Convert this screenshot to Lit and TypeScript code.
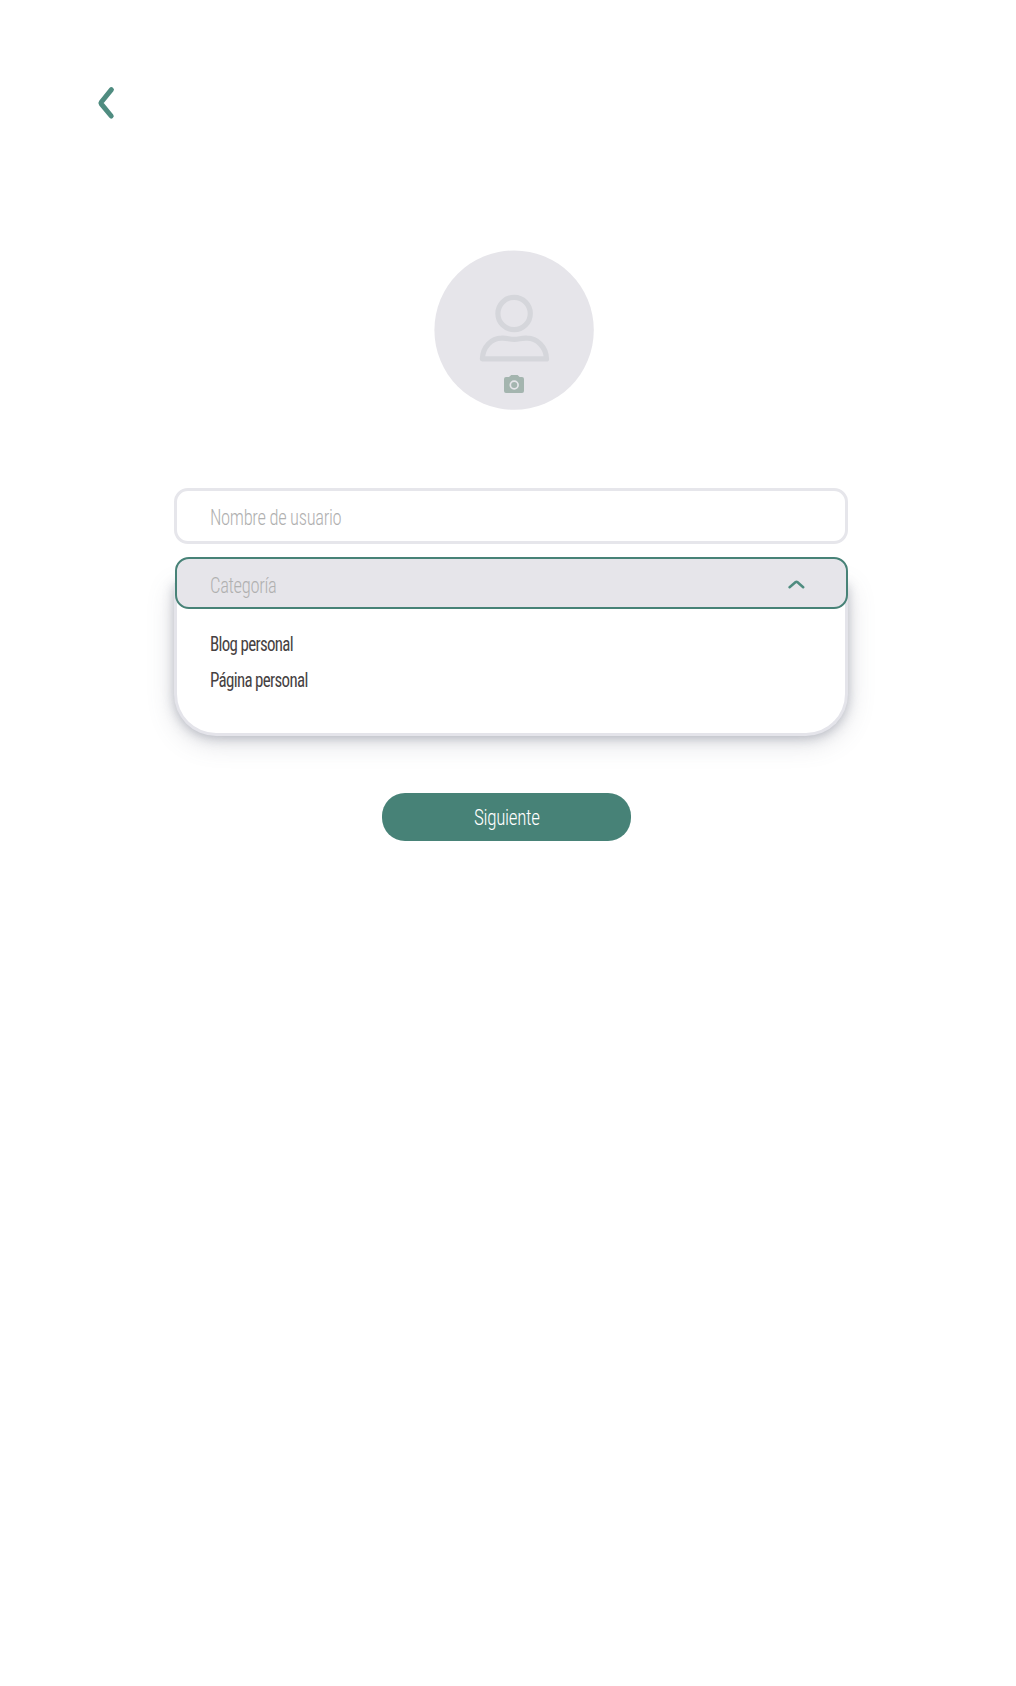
import { LitElement, html, css } from "lit";
import { customElement, state } from "lit/decorators.js";

@customElement("app-root")
export class AppRoot extends LitElement {
  static styles = css`
    :host {
      display: block;
      background: #fff;
      font-family: Roboto, "Liberation Sans", sans-serif;
      font-stretch: 75%;
      font-weight: 340;
      font-size: 21.5px;
    }
    * { box-sizing: border-box; }
    svg { display: block; }
    button {
      font: inherit;
      font-stretch: 75%;
      background: none;
      border: 0;
      padding: 0;
      margin: 0;
    }
    .page {
      min-height: 1686px;
      display: flex;
      flex-direction: column;
      align-items: flex-start;
      overflow: hidden;
    }
    .back { margin: 83px 0 0 94px; height: 40px; }
    .avatar {
      margin: 127px 0 0 434px;
      width: 160px;
      height: 160px;
    }
    .form {
      margin: 77.5px 0 0 174px;
      width: 674.4px;
      display: flex;
      flex-direction: column;
    }
    .label {
      display: inline-block;
      white-space: nowrap;
      letter-spacing: -0.4px;
      line-height: 30px;
      transform-origin: 0 50%;
      transform: scaleX(0.863);
    }
    .username {
      height: 56px;
      border: 3px solid #e6e6eb;
      border-radius: 14px;
      padding: 4px 0 0 33.4px;
      display: flex;
      align-items: center;
      color: #b0b0b0;
    }
    .select {
      margin-top: 13.5px;
      display: flex;
      flex-direction: column;
    }
    .toggle {
      position: relative;
      z-index: 1;
      margin: 0 0.4px 0 1px;
      height: 51.5px;
      border: 2px solid #478277;
      border-radius: 14px;
      background: #e6e5ea;
      padding: 0 41px 0 33.4px;
      display: flex;
      align-items: center;
      justify-content: space-between;
      color: #b0b0b0;
    }
    .toggle .label { margin-top: 5.5px; }
    .toggle svg { margin-top: 3px; }
    .options {
      margin: -25.5px 0 0;
      height: 152.5px;
      border: 3.4px solid #e4e4ea;
      border-top: 0;
      border-radius: 0 0 42px 42px;
      background: #fff;
      box-shadow: 0 2px 11px rgba(105, 110, 130, 0.38), 0 6px 27px rgba(105, 110, 125, 0.24);
      padding: 43.4px 0 0 33.2px;
      display: flex;
      flex-direction: column;
      align-items: flex-start;
      color: #464142;
      font-size: 20px;
      font-weight: 370;
    }
    .options .label {
      line-height: 36px;
      letter-spacing: -0.8px;
      transform: scaleX(0.847);
    }
    .next {
      margin: 57.5px 0 0 382px;
      width: 248.5px;
      height: 48px;
      border-radius: 23px;
      background: #478277;
      color: #fff;
      display: flex;
      align-items: center;
      justify-content: center;
      padding: 1.5px 0 0 1px;
    }
    .next .label { transform-origin: 50% 50%; transform: scaleX(0.89); }
  `;

  @state() private open = true;

  private categories = ["Blog personal", "Página personal"];

  render() {
    return html`
      <main class="page">
        <button class="back">
          <svg width="24" height="40" viewBox="0 0 24 40" fill="none" stroke="#4f8c80" stroke-width="5" stroke-linecap="round" stroke-linejoin="round">
            <path d="M17.4 6.6 L7.2 19.2 Q6.6 20 7.2 20.8 L17.2 33" />
          </svg>
        </button>

        <svg class="avatar" viewBox="434 250 160 160">
          <circle cx="514.1" cy="330.1" r="79.7" fill="#e6e5ea" />
          <g fill="none" stroke="#d5d6db" stroke-width="5.2" stroke-linejoin="round">
            <circle cx="514.1" cy="313.5" r="16.2" />
            <path d="M482.4 358.9 H546.5 C546.2 347 537 338.2 527 338.2 C521 337.8 519.5 339.3 514.2 339.3 C509 339.3 507 337.8 501.5 338.2 C491.5 338.2 482.8 347 482.4 358.9 Z" />
          </g>
          <path fill="#a4b5af" d="M506 377 H509 L511.2 375 H517.6 L519.6 377 H522 Q524 377 524 379 V391 Q524 393 522 393 H506 Q504 393 504 391 V379 Q504 377 506 377 Z" />
          <circle cx="514.2" cy="385" r="3.9" fill="none" stroke="#e6e5ea" stroke-width="1.7" />
        </svg>

        <section class="form">
          <div class="username"><span class="label">Nombre de usuario</span></div>
          <div class="select">
            <button class="toggle" @click=${() => (this.open = !this.open)}>
              <span class="label">Categoría</span>
              <svg width="17" height="9" viewBox="0 0 17 9" fill="none" stroke="#4f8c80" stroke-width="2.5" stroke-linecap="round" stroke-linejoin="round">
                <path d="M1.6 7.2 L7.7 2 Q8.5 1.4 9.3 2 L15.2 7.2" />
              </svg>
            </button>
            ${this.open
              ? html`<div class="options">
                  ${this.categories.map((c) => html`<span class="label">${c}</span>`)}
                </div>`
              : null}
          </div>
        </section>

        <button class="next"><span class="label">Siguiente</span></button>
      </main>
    `;
  }
}
